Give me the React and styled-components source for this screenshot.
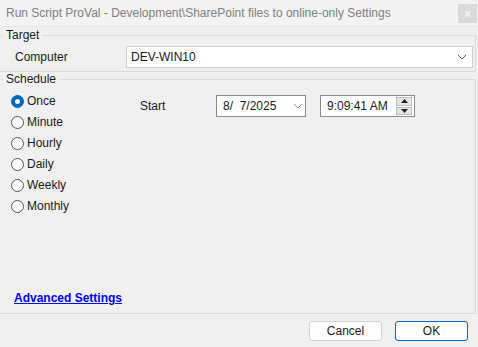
import React from 'react';
import styled, { createGlobalStyle } from 'styled-components';

const GlobalStyle = createGlobalStyle`
  *, *::before, *::after {
    box-sizing: border-box;
  }
  html, body {
    margin: 0;
    padding: 0;
    background: #f0f0f0;
  }
  body {
    font-family: "Liberation Sans", Arial, sans-serif;
    font-size: 12px;
    color: #1a1a1a;
  }
`;

const Window = styled.div`
  width: 478px;
  height: 347px;
  display: flex;
  flex-direction: column;
  background: #f0f0f0;
  overflow: hidden;
`;

const TitleBar = styled.div`
  height: 27px;
  flex-shrink: 0;
  display: flex;
  align-items: center;
  justify-content: space-between;
  padding-left: 6px;
  background: #f3f3f3;
  border-bottom: 1px solid #e6e6e6;
`;

const Title = styled.span`
  font-size: 12px;
  color: #808080;
  white-space: nowrap;
`;

const CloseBox = styled.div`
  width: 19px;
  height: 19px;
  margin-right: 1px;
  align-self: flex-start;
  margin-top: 4px;
  background: #dadada;
  color: #f4f4f4;
  font-size: 12px;
  font-weight: bold;
  display: flex;
  align-items: center;
  justify-content: center;
`;

const Group = styled.fieldset`
  margin: ${(p) => p.$top || 0}px 2px 0 0;
  padding: 0;
  border: 1px solid #dadada;
  border-left-color: transparent;
  min-width: 0;
  flex-shrink: 0;
`;

const Legend = styled.legend`
  margin-left: 2px;
  padding: 0 3px;
  font-size: 12px;
  line-height: 16px;
  color: #1a1a1a;
`;

const TargetBody = styled.div`
  display: flex;
  align-items: center;
  height: 28px;
  padding: 0 2px 0 14px;
`;

const FieldLabel = styled.span`
  width: ${(p) => p.$w}px;
  flex-shrink: 0;
`;

const ComboBox = styled.div`
  flex: 1;
  height: 22px;
  background: #fff;
  border: 1px solid #cfcfcf;
  display: flex;
  align-items: center;
  justify-content: space-between;
  padding: 0 5px 0 4px;
  font-size: 12px;
`;

const ScheduleBody = styled.div`
  display: flex;
  height: 226px;
  padding: 6px 0 0 10px;
  position: relative;
`;

const RadioList = styled.div`
  display: flex;
  flex-direction: column;
  gap: 5px;
  width: 129px;
`;

const RadioRow = styled.label`
  display: flex;
  align-items: center;
  gap: 3px;
  height: 16px;
`;

const RadioDot = styled.span`
  width: 13px;
  height: 13px;
  border-radius: 50%;
  border: 1px solid ${(p) => (p.$on ? '#0067c0' : '#555')};
  background: ${(p) => (p.$on ? '#0067c0' : '#fff')};
  display: flex;
  align-items: center;
  justify-content: center;
  &::after {
    content: '';
    width: 5px;
    height: 5px;
    border-radius: 50%;
    background: ${(p) => (p.$on ? '#fff' : 'transparent')};
  }
`;

const StartRow = styled.div`
  display: flex;
  align-items: center;
  height: 22px;
  margin-top: 2px;
`;

const Picker = styled.div`
  width: ${(p) => p.$w}px;
  height: 22px;
  background: #fff;
  border: 1px solid #8a8a8a;
  display: flex;
  align-items: center;
  justify-content: space-between;
  padding: 0 2px 0 6px;
  margin-right: ${(p) => p.$mr || 0}px;
  font-size: 12px;
`;

const Spinner = styled.div`
  width: 16px;
  height: 18px;
  display: flex;
  flex-direction: column;
  gap: 1px;
`;

const SpinBtn = styled.div`
  flex: 1;
  background: #e6e6e6;
  border: 1px solid #bdbdbd;
  display: flex;
  align-items: center;
  justify-content: center;
`;

const LinkArea = styled.div`
  position: absolute;
  left: 13px;
  bottom: 8px;
`;

const Link = styled.a`
  color: #0000ee;
  font-weight: bold;
  font-size: 12px;
  text-decoration: underline;
  cursor: pointer;
`;

const Footer = styled.div`
  flex: 1;
  display: flex;
  justify-content: flex-end;
  align-items: flex-start;
  gap: 13px;
  padding: 7px 10px 0 0;
`;

const Button = styled.button`
  width: 73px;
  height: 20px;
  background: #fdfdfd;
  border: 1px solid ${(p) => (p.$primary ? '#0067c0' : '#d0d0d0')};
  border-radius: 3px;
  font-family: inherit;
  font-size: 12px;
  color: #1a1a1a;
  padding: 0;
`;

const Chevron = ({ color = '#606060' }) => (
  <svg width="10" height="6" viewBox="0 0 10 6">
    <path d="M1 1l4 4 4-4" fill="none" stroke={color} strokeWidth="1" />
  </svg>
);

const Arrow = ({ up }) => (
  <svg width="7" height="4" viewBox="0 0 7 4">
    <path d={up ? 'M0 4h7L3.5 0z' : 'M0 0h7L3.5 4z'} fill="#222" />
  </svg>
);

const schedules = ['Once', 'Minute', 'Hourly', 'Daily', 'Weekly', 'Monthly'];

export default function App() {
  return (
    <>
      <GlobalStyle />
      <Window>
        <TitleBar>
          <Title>Run Script ProVal - Development\SharePoint files to online-only Settings</Title>
          <CloseBox>×</CloseBox>
        </TitleBar>

        <Group>
          <Legend>Target</Legend>
          <TargetBody>
            <FieldLabel $w={111}>Computer</FieldLabel>
            <ComboBox>
              <span>DEV-WIN10</span>
              <Chevron />
            </ComboBox>
          </TargetBody>
        </Group>

        <Group $top={-1}>
          <Legend>Schedule</Legend>
          <ScheduleBody>
            <RadioList>
              {schedules.map((s, i) => (
                <RadioRow key={s}>
                  <RadioDot $on={i === 0} />
                  {s}
                </RadioRow>
              ))}
            </RadioList>
            <StartRow>
              <FieldLabel $w={76}>Start</FieldLabel>
              <Picker $w={90} $mr={14}>
                <span>8/&nbsp;&nbsp;7/2025</span>
                <Chevron color="#888" />
              </Picker>
              <Picker $w={95}>
                <span>9:09:41 AM</span>
                <Spinner>
                  <SpinBtn><Arrow up /></SpinBtn>
                  <SpinBtn><Arrow /></SpinBtn>
                </Spinner>
              </Picker>
            </StartRow>
            <LinkArea>
              <Link>Advanced Settings</Link>
            </LinkArea>
          </ScheduleBody>
        </Group>

        <Footer>
          <Button>Cancel</Button>
          <Button $primary>OK</Button>
        </Footer>
      </Window>
    </>
  );
}
